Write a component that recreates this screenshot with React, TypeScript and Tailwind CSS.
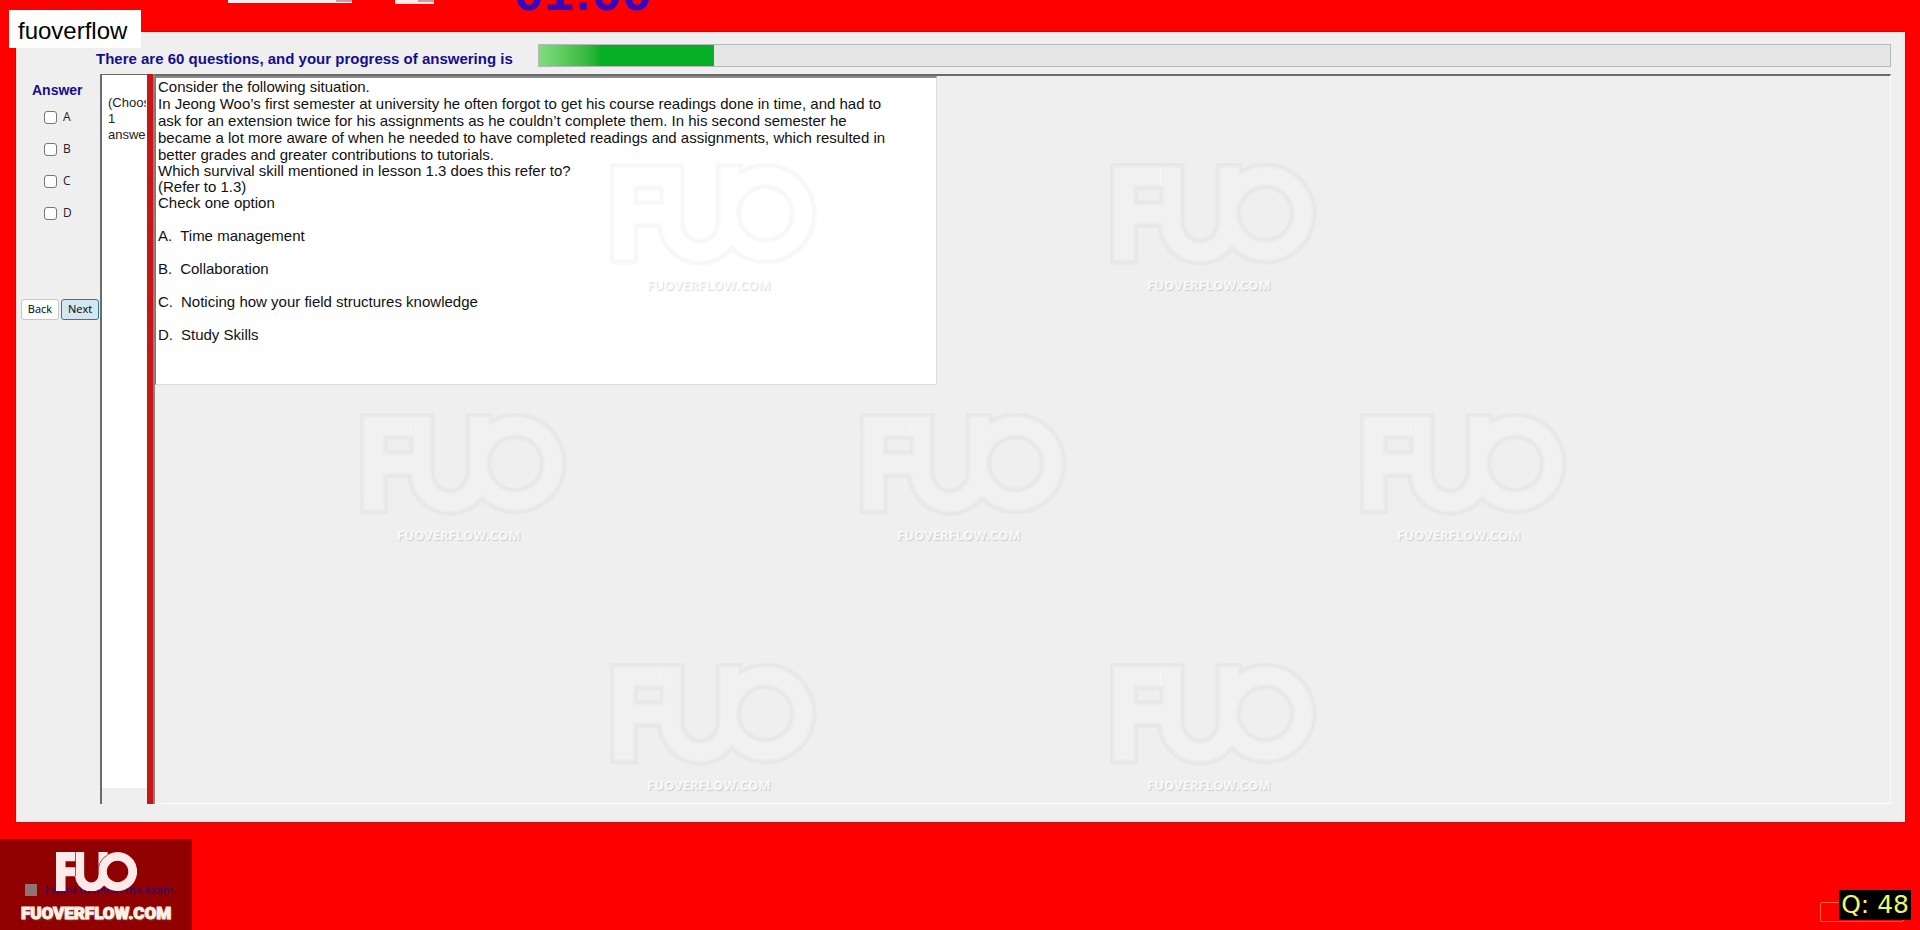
import { useState } from "react";

const answers = ["A", "B", "C", "D"];

const options = [
    { letter: "A", text: "Time management" },
    { letter: "B", text: "Collaboration" },
    { letter: "C", text: "Noticing how your field structures knowledge" },
    { letter: "D", text: "Study Skills" },
];

const FUO_PATH =
    "M0 0H71V57A18 20 0 0 0 107 57V0H130V7A49 49 0 1 1 121 84A41 41 0 0 1 48 61H24V98H0ZM24 23H50V38H24ZM128 49A27 27 0 1 0 182 49A27 27 0 1 0 128 49Z";

const Watermark = () => (
    <div className="flex w-[204px] flex-col items-start">
        <svg viewBox="-2 -2 210 104" className="h-[103px] w-[208px] shrink-0" fill="none">
            <path d={FUO_PATH} fillRule="evenodd" stroke="#000" strokeOpacity="0.014" strokeWidth="6" />
            <path d={FUO_PATH} fillRule="evenodd" fill="#fff" fillOpacity="0.12" stroke="#000" strokeOpacity="0.016" strokeWidth="3" />
            <path d="M49 2V21" stroke="#fff" strokeOpacity="0.3" />
        </svg>
        <span className="mt-[9px] ml-[37px] font-['Open_Sans',sans-serif] text-[13px] leading-5 font-bold text-white/80 [text-shadow:1px_1px_1px_rgba(0,0,0,0.15)]">
            FUOVERFLOW.COM
        </span>
    </div>
);

const WatermarkLayer = () => (
    <div className="pointer-events-none absolute inset-x-0 top-[163px] flex flex-col gap-[118px] select-none" aria-hidden="true">
        <div className="flex gap-[296px] pl-[610px]">
            <Watermark />
            <Watermark />
        </div>
        <div className="flex gap-[296px] pl-[360px]">
            <Watermark />
            <Watermark />
            <Watermark />
        </div>
        <div className="flex gap-[296px] pl-[610px]">
            <Watermark />
            <Watermark />
        </div>
    </div>
);

const TopBar = () => (
    <header className="flex h-8 shrink-0 items-start overflow-hidden pl-[228px]">
        <div className="flex h-[3px] w-[124px] justify-end bg-[#ffe9e9]">
            <span className="h-[2px] w-4 bg-[#d09a9e]" />
        </div>
        <div className="ml-[43px] flex h-[4px] w-[39px] justify-end bg-[#ffe9e9]">
            <span className="h-[2px] w-4 bg-[#d09a9e]" />
        </div>
        <time className="-mt-9 ml-20 text-[54px] leading-none font-bold text-[#3208c4]">01:00</time>
    </header>
);

const AnswerPanel = () => {
    const [checked, setChecked] = useState<string[]>([]);

    const toggle = (letter: string) => {
        setChecked((prev) => (prev.includes(letter) ? prev.filter((l) => l !== letter) : [...prev, letter]));
    };

    return (
        <aside className="flex w-[82px] shrink-0 flex-col">
            <h2 className="pt-1.5 pl-3.5 text-sm leading-5 font-bold text-[#150d8c]">Answer</h2>
            <div className="mt-[7px] flex flex-col gap-3 pl-[26px]">
                {answers.map((letter) => (
                    <label key={letter} className="flex h-5 items-center gap-1.5 font-['Open_Sans',sans-serif] text-xs text-[#222]">
                        <input
                            type="checkbox"
                            className="size-[13px] appearance-none rounded-[3px] border border-[#777] bg-white checked:bg-[#0067c0]"
                            checked={checked.includes(letter)}
                            onChange={() => toggle(letter)}
                        />
                        {letter}
                    </label>
                ))}
            </div>
            <div className="mt-[76px] flex gap-0.5 pl-[3px] font-['Open_Sans',sans-serif] text-[11px] text-black">
                <button className="h-[21px] w-[38px] rounded-[3px] border border-[#c8c8c8] bg-[#fdfdfd]">Back</button>
                <button className="h-[21px] w-[38px] rounded-[3px] border border-[#2f7a94] bg-[#d3e6f2]">Next</button>
            </div>
        </aside>
    );
};

const QuestionPanel = () => (
    <section className="min-w-0 flex-1 border-t-2 border-r border-b border-t-[#6b6b6b] border-r-white border-b-white bg-[#efefef]">
        <article className="h-[309px] w-[782px] border border-t-2 border-[#dcdcdc] border-t-[#8a8a8a] border-l-[#777] bg-white pl-0.5 text-[15px] text-[#111]">
            <p className="mt-px leading-4">Consider the following situation.</p>
            <p className="leading-[17px] whitespace-nowrap">
                In Jeong Woo’s first semester at university he often forgot to get his course readings done in time, and had to
                <br />
                ask for an extension twice for his assignments as he couldn’t complete them. In his second semester he
                <br />
                became a lot more aware of when he needed to have completed readings and assignments, which resulted in
                <br />
                better grades and greater contributions to tutorials.
            </p>
            <p className="leading-4">Which survival skill mentioned in lesson 1.3 does this refer to?</p>
            <p className="leading-4">(Refer to 1.3)</p>
            <p className="leading-4">Check one option</p>
            <ul className="mt-[17px] flex flex-col gap-[17px] leading-4">
                {options.map((option) => (
                    <li key={option.letter} className="flex gap-2">
                        <span>{option.letter}.</span>
                        {option.text}
                    </li>
                ))}
            </ul>
        </article>
    </section>
);

const Footer = () => (
    <footer className="relative flex h-[108px] shrink-0 items-end justify-between">
        <label className="flex items-center gap-2 pb-8 pl-[25px] text-[11px] leading-4 font-bold text-[#5a10c0]">
            <input type="checkbox" className="size-3 appearance-none bg-white" />
            I want to finish the exam.
        </label>
        <div className="absolute bottom-0 left-0 flex h-[91px] w-[192px] flex-col items-center bg-[#350000]/55 pt-[13px]">
            <svg viewBox="0 0 204 98" className="h-[39px] w-[81px]">
                <path d={FUO_PATH} fillRule="evenodd" fill="#ffe9e9" />
                <path d="M49 0V61M106 57A49 49 0 0 1 130 7" fill="none" stroke="#8f2020" strokeWidth="2" />
            </svg>
            <span className="mt-2.5 font-['Roboto',sans-serif] text-[17px] leading-6 font-black text-[#fff0e6] [-webkit-text-stroke:1px_#fff0e6] [text-shadow:1px_1px_2px_#8a6a40]">
                FUOVERFLOW.COM
            </span>
        </div>
        <button className="mr-4 mb-2 h-5 w-[84px] rounded-[2px] border border-[#f56a20]" aria-label="Exit" />
        <span className="absolute right-[9px] bottom-2.5 bg-black px-0.5 font-['DejaVu_Sans',sans-serif] text-[25px] leading-[30px] whitespace-pre text-[#eef56a]">
            Q: 48
        </span>
    </footer>
);

const App = () => (
    <div className="relative flex min-h-screen flex-col overflow-hidden bg-[#ff0000] font-['Liberation_Sans',Arial,sans-serif]">
        <TopBar />
        <main className="mr-[15px] ml-4 flex flex-1 flex-col border-2 border-[#fbe4e0] bg-[#efefef] pr-3 pb-4 shadow-[0_0_0_1px_#b01515]">
            <div className="flex h-10 shrink-0 items-center gap-[25px] pl-[78px]">
                <p className="pt-2.5 text-[15px] leading-5 font-bold whitespace-nowrap text-[#150d8c]">
                    There are 60 questions, and your progress of answering is
                </p>
                <div className="mt-0.5 h-[23px] flex-1 border border-[#b4b8b8] bg-[#e6e6e6]" role="progressbar" aria-label="Progress" aria-valuenow={13}>
                    <div className="h-full w-[13%] bg-linear-to-r from-[#7edc7e] via-[#06b025] via-35% to-[#06b025]" />
                </div>
            </div>
            <div className="flex flex-1">
                <AnswerPanel />
                <div className="flex w-[47px] shrink-0 flex-col border-t border-l-2 border-[#6b6b6b] bg-white">
                    <div className="mr-px flex-1 overflow-hidden pt-5 pl-1.5 text-[13px] leading-4 text-[#222]">
                        (Choose
                        <br />1<br />
                        answer)
                    </div>
                    <div className="h-4 bg-[#eeeeee]" />
                </div>
                <div className="w-[6px] shrink-0 bg-[#c81616]" />
                <div className="w-[2px] shrink-0 bg-[#8c8080]" />
                <QuestionPanel />
            </div>
        </main>
        <Footer />
        <WatermarkLayer />
        <div className="absolute top-2.5 left-[9px] bg-white pt-1 pr-[14px] pl-[9px] text-2xl leading-[34px] text-black">fuoverflow</div>
    </div>
);

export default App;
